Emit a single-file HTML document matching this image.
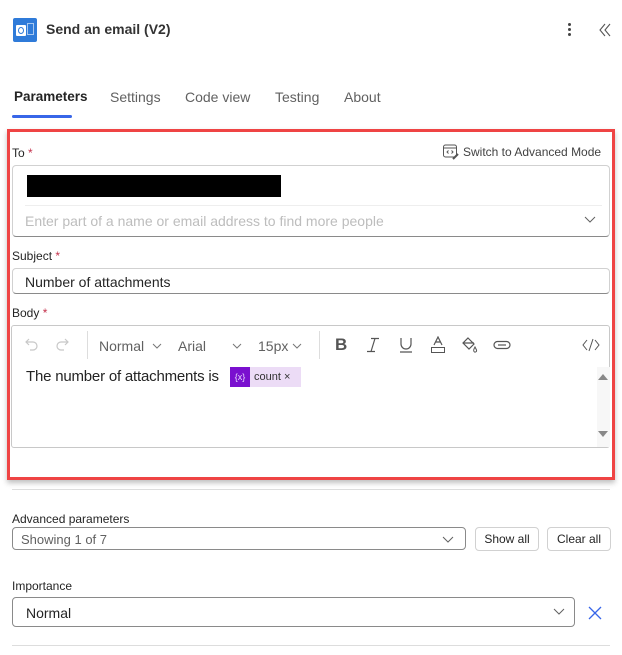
<!DOCTYPE html>
<html><head><meta charset="utf-8"><style>
*{box-sizing:border-box;margin:0;padding:0}
body{width:622px;height:655px;background:#fff;font-family:"Segoe UI","Liberation Sans",sans-serif;color:#242424;position:relative;overflow:hidden}
.a{position:absolute}
.lbl{font-size:12px;color:#242424}
.req{color:#c4314b}
.box{border:1px solid #d1d1d1;border-bottom-color:#8a8a8a;border-radius:4px;background:#fff}
.tab{font-size:14px;color:#616161;top:89px}
.tb{color:#616161;font-size:14px;top:338px}
</style></head><body>
<!-- header -->
<div class="a" style="left:13px;top:18px;width:24px;height:24px;background:#2f7bd9;border-radius:2px"></div>
<div class="a" style="left:16px;top:25px;width:10px;height:11px;background:#fff;border-radius:1px"></div>
<div class="a" style="left:18px;top:27px;width:6px;height:7px;border:1.5px solid #2f7bd9;border-radius:50%"></div>
<div class="a" style="left:27px;top:23px;width:7px;height:12px;border:1px solid #a8c8f0"></div>
<div class="a" style="left:46px;top:21px;font-size:14px;font-weight:600;color:#333">Send an email (V2)</div>
<div class="a" style="left:568px;top:23px;width:3px;height:3px;background:#444;border-radius:50%;box-shadow:0 5px 0 #444,0 10px 0 #444"></div>
<svg class="a" style="left:598px;top:23px" width="14" height="14" viewBox="0 0 14 14"><path d="M7 1L2 7l5 6M12 1L7 7l5 6" fill="none" stroke="#555" stroke-width="1.1"/></svg>
<!-- tabs -->
<div class="a tab" style="left:14px;color:#242424;font-weight:600;font-size:13.5px">Parameters</div>
<div class="a tab" style="left:110px">Settings</div>
<div class="a tab" style="left:185px">Code view</div>
<div class="a tab" style="left:275px">Testing</div>
<div class="a tab" style="left:344px">About</div>
<div class="a" style="left:12px;top:115px;width:60px;height:3px;background:#3866e8;border-radius:2px"></div>
<!-- red box -->
<div class="a" style="left:7px;top:129px;width:608px;height:351px;border:3px solid #ef4444;box-shadow:0 3px 5px rgba(0,0,0,.25)"></div>
<div class="a lbl" style="left:12px;top:146px">To <span class="req">*</span></div>
<svg class="a" style="left:442px;top:143px" width="17" height="17" viewBox="0 0 17 17"><rect x="1.5" y="2" width="13" height="12" rx="2" fill="none" stroke="#555"/><path d="M1.5 5h13M6.5 7.5L5 9l1.5 1.5M9.5 7.5L11 9l-1.5 1.5" fill="none" stroke="#555"/><path d="M11 16l5-5" stroke="#555" stroke-width="2"/></svg>
<div class="a" style="left:463px;top:145px;font-size:12px;color:#424242">Switch to Advanced Mode</div>
<div class="a box" style="left:12px;top:165px;width:598px;height:72px;border-bottom-color:#8a8a8a"></div>
<div class="a" style="left:27px;top:175px;width:254px;height:22px;background:#000"></div>
<div class="a" style="left:25px;top:205px;width:577px;height:1px;background:#eee"></div>
<div class="a" style="left:25px;top:213px;font-size:14px;color:#bdbdbd">Enter part of a name or email address to find more people</div>
<svg class="a" style="left:584px;top:216px" width="12" height="8" viewBox="0 0 12 8"><path d="M1 1l5 5 5-5" fill="none" stroke="#616161"/></svg>
<div class="a lbl" style="left:12px;top:249px">Subject <span class="req">*</span></div>
<div class="a box" style="left:12px;top:268px;width:598px;height:26px"></div>
<div class="a" style="left:25px;top:274px;font-size:14px">Number of attachments</div>
<div class="a lbl" style="left:12px;top:306px">Body <span class="req">*</span></div>
<div class="a" style="left:11px;top:325px;width:599px;height:123px;border:1px solid #c8c8c8;border-radius:3px"></div>
<!-- toolbar -->
<svg class="a" style="left:24px;top:336px" width="16" height="18" viewBox="0 0 16 18"><path d="M5 3L2 6l3 3M2 6h7a4 4 0 010 8H6" fill="none" stroke="#c8c8c8" stroke-width="1.2"/></svg>
<svg class="a" style="left:54px;top:336px" width="16" height="18" viewBox="0 0 16 18"><path d="M11 3l3 3-3 3M14 6H7a4 4 0 000 8h3" fill="none" stroke="#c8c8c8" stroke-width="1.2"/></svg>
<div class="a" style="left:87px;top:331px;width:1px;height:28px;background:#ddd"></div>
<div class="a tb" style="left:99px">Normal</div>
<div class="a tb" style="left:178px">Arial</div>
<div class="a tb" style="left:258px">15px</div>
<svg class="a" style="left:152px;top:343px" width="10" height="6"><path d="M1 1l4 4 4-4" fill="none" stroke="#777"/></svg>
<svg class="a" style="left:232px;top:343px" width="10" height="6"><path d="M1 1l4 4 4-4" fill="none" stroke="#777"/></svg>
<svg class="a" style="left:292px;top:343px" width="10" height="6"><path d="M1 1l4 4 4-4" fill="none" stroke="#777"/></svg>
<div class="a" style="left:319px;top:331px;width:1px;height:28px;background:#ddd"></div>
<div class="a" style="left:335px;top:335px;font-size:17px;font-weight:700;color:#555">B</div>
<svg class="a" style="left:366px;top:337px" width="14" height="16"><path d="M5 1.5h8M1 14.5h8M9 1.5L5 14.5" fill="none" stroke="#555" stroke-width="1.2"/></svg>
<svg class="a" style="left:399px;top:337px" width="14" height="16"><path d="M2 1v6a5 5 0 0010 0V1M1 15h12" fill="none" stroke="#555" stroke-width="1.2"/></svg>
<svg class="a" style="left:430px;top:336px" width="16" height="18"><path d="M4 9l4-8 4 8M5.5 6h5" fill="none" stroke="#555" stroke-width="1.2"/><rect x="1.5" y="11.5" width="13" height="5" fill="none" stroke="#555"/></svg>
<svg class="a" style="left:460px;top:336px" width="18" height="18"><path d="M8 2l6 6-5 5-6-6zM3 7h11" fill="none" stroke="#555" stroke-width="1.2"/><path d="M15 11c-1 2-2 3-1 4.5s3 0 2.5-1.5z" fill="none" stroke="#555"/></svg>
<svg class="a" style="left:493px;top:339px" width="18" height="12"><rect x="1" y="2.5" width="16" height="7" rx="3.5" fill="none" stroke="#555" stroke-width="1.2"/><path d="M5 6h8" stroke="#555" stroke-width="1.2"/></svg>
<svg class="a" style="left:582px;top:338px" width="18" height="14"><path d="M5 2L1 7l4 5M13 2l4 5-4 5M11 1L7 13" fill="none" stroke="#555"/></svg>
<!-- content -->
<div class="a" style="left:26px;top:368px;font-size:15px;letter-spacing:-0.2px">The number of attachments is</div>
<div class="a" style="left:230px;top:367px;width:20px;height:20px;background:#7a10cf;color:#e8d8ff;font-size:9px;text-align:center;line-height:20px">{x}</div>
<div class="a" style="left:250px;top:367px;width:51px;height:20px;background:#ecdcf6;font-size:11px;line-height:20px;padding-left:4px;color:#333">count ×</div>
<div class="a" style="left:597px;top:367px;width:13px;height:80px;background:#f7f7f7"></div>
<svg class="a" style="left:598px;top:373px" width="10" height="8"><path d="M0 7h10L5 1z" fill="#888"/></svg>
<svg class="a" style="left:598px;top:430px" width="10" height="8"><path d="M0 1h10L5 7z" fill="#888"/></svg>
<div class="a" style="left:12px;top:489px;width:598px;height:1px;background:#ddd"></div>
<!-- advanced -->
<div class="a lbl" style="left:12px;top:512px">Advanced parameters</div>
<div class="a box" style="left:12px;top:527px;width:454px;height:23px;border-color:#8a8a8a"></div>
<div class="a" style="left:21px;top:532px;font-size:13px;color:#616161">Showing 1 of 7</div>
<svg class="a" style="left:442px;top:536px" width="12" height="7"><path d="M1 1l5 5 5-5" fill="none" stroke="#616161"/></svg>
<div class="a" style="left:475px;top:527px;width:64px;height:24px;border:1px solid #d1d1d1;border-radius:4px;font-size:12px;text-align:center;line-height:23px">Show all</div>
<div class="a" style="left:547px;top:527px;width:64px;height:24px;border:1px solid #d1d1d1;border-radius:4px;font-size:12px;text-align:center;line-height:23px">Clear all</div>
<div class="a lbl" style="left:12px;top:579px">Importance</div>
<div class="a box" style="left:12px;top:597px;width:563px;height:30px;border-color:#8a8a8a"></div>
<div class="a" style="left:26px;top:605px;font-size:14px">Normal</div>
<svg class="a" style="left:553px;top:608px" width="12" height="7"><path d="M1 1l5 5 5-5" fill="none" stroke="#616161"/></svg>
<svg class="a" style="left:588px;top:606px" width="14" height="14"><path d="M1 1l12 12M13 1L1 13" stroke="#3866e8" stroke-width="1.3"/></svg>
<div class="a" style="left:12px;top:645px;width:598px;height:1px;background:#ddd"></div>
</body></html>
